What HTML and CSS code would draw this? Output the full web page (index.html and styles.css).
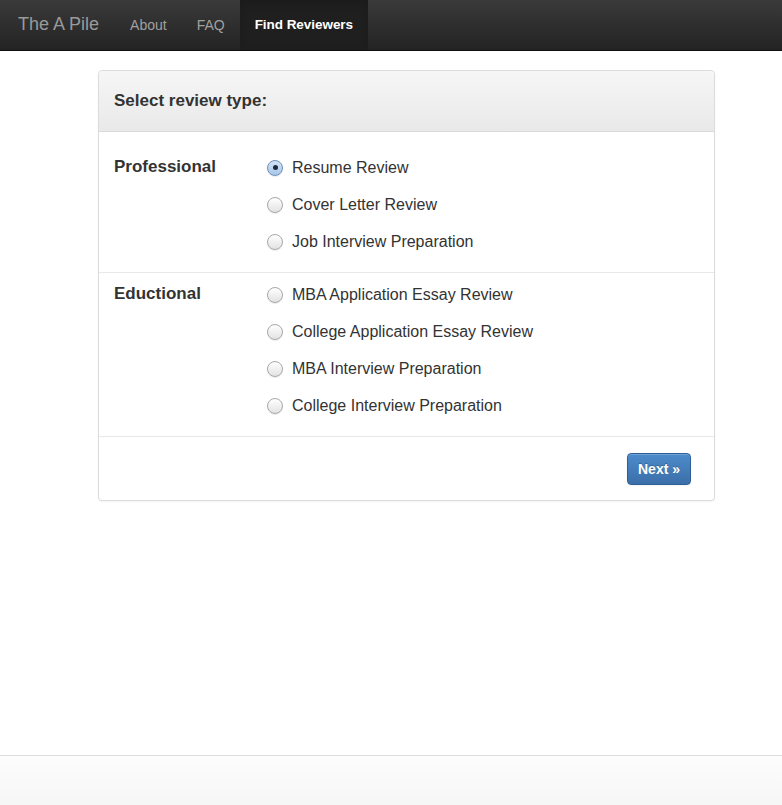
FILE: index.html
```html
<!DOCTYPE html>
<html>
<head>
<meta charset="utf-8">
<title>The A Pile</title>
<link rel="stylesheet" href="styles.css">
</head>
<body>
<div class="page">
  <header class="navbar">
    <a class="brand" href="#">The A Pile</a>
    <nav class="nav">
      <a class="nav-link" href="#">About</a>
      <a class="nav-link" href="#">FAQ</a>
      <a class="nav-link active" href="#">Find Reviewers</a>
    </nav>
  </header>

  <main class="main">
    <form class="panel">
      <div class="panel-header">Select review type:</div>

      <div class="section section-first">
        <div class="section-label">Professional</div>
        <div class="options">
          <label class="option"><input type="radio" name="type" checked><span class="radio"></span><span>Resume Review</span></label>
          <label class="option"><input type="radio" name="type"><span class="radio"></span><span>Cover Letter Review</span></label>
          <label class="option"><input type="radio" name="type"><span class="radio"></span><span>Job Interview Preparation</span></label>
        </div>
      </div>

      <div class="section section-second">
        <div class="section-label">Eductional</div>
        <div class="options">
          <label class="option"><input type="radio" name="type"><span class="radio"></span><span>MBA Application Essay Review</span></label>
          <label class="option"><input type="radio" name="type"><span class="radio"></span><span>College Application Essay Review</span></label>
          <label class="option"><input type="radio" name="type"><span class="radio"></span><span>MBA Interview Preparation</span></label>
          <label class="option"><input type="radio" name="type"><span class="radio"></span><span>College Interview Preparation</span></label>
        </div>
      </div>

      <div class="panel-footer">
        <button type="button" class="btn">Next &raquo;</button>
      </div>
    </form>
  </main>

  <footer class="footer"></footer>
</div>
</body>
</html>
```

FILE: styles.css
```css
* { box-sizing: border-box; }

html, body {
  margin: 0;
  padding: 0;
  height: 100%;
}

body {
  font-family: "Liberation Sans", Arial, Helvetica, sans-serif;
  color: #333;
  background: #fff;
}

.page {
  min-height: 100vh;
  display: flex;
  flex-direction: column;
}

/* navbar */
.navbar {
  height: 51px;
  display: flex;
  align-items: stretch;
  background: linear-gradient(to bottom, #3a3a3a, #232323);
  border-bottom: 1px solid #0e0e0e;
}

.brand {
  display: flex;
  align-items: center;
  padding: 0 16px 2px 18px;
  font-size: 18px;
  color: #9a9a9a;
  text-decoration: none;
}

.nav {
  display: flex;
}

.nav-link {
  display: flex;
  align-items: center;
  padding: 0 15px 1px;
  font-size: 14px;
  color: #a0a0a0;
  text-decoration: none;
}

.nav-link.active {
  background: #1f1f1f;
  color: #fff;
  font-weight: bold;
  font-size: 13.5px;
  letter-spacing: -0.05px;
  padding-left: 15px;
  padding-right: 15px;
  box-shadow: inset 0 3px 8px rgba(0,0,0,0.15);
}

/* main */
.main {
  flex: 1;
  padding-top: 19px;
}

.panel {
  margin-left: 98px;
  width: 617px;
  border: 1px solid #dcdcdc;
  border-radius: 4px;
  box-shadow: 0 1px 2px rgba(0,0,0,0.05);
  background: #fff;
}

.panel-header {
  height: 61px;
  padding: 0 15px;
  display: flex;
  align-items: center;
  font-size: 17px;
  font-weight: bold;
  color: #333;
  background: linear-gradient(to bottom, #f6f6f6, #e9e9e9);
  border-bottom: 1px solid #dadada;
  border-radius: 4px 4px 0 0;
}

.section {
  display: grid;
  grid-template-columns: 153px 1fr;
  padding-left: 15px;
  border-bottom: 1px solid #e8e8e8;
}

.section-first {
  padding-top: 17px;
  padding-bottom: 12px;
}

.section-second {
  padding-top: 3px;
  padding-bottom: 12px;
}

.section-label {
  font-size: 17px;
  font-weight: bold;
  line-height: 37px;
  color: #333;
  margin-top: -1px;
}

.options {
  display: flex;
  flex-direction: column;
}

.option {
  height: 37px;
  display: flex;
  align-items: center;
  font-size: 16px;
  color: #333;
  cursor: pointer;
}

.option input {
  position: absolute;
  opacity: 0;
  width: 0;
  height: 0;
}

.radio {
  width: 16px;
  height: 16px;
  border-radius: 50%;
  margin-right: 9px;
  border: 1px solid #a8a8a8;
  background: linear-gradient(to bottom, #ffffff, #e2e2e2);
  box-shadow: 0 1px 1px rgba(0,0,0,0.08);
  display: flex;
  align-items: center;
  justify-content: center;
  flex: none;
}

.option input:checked + .radio {
  border-color: #6d8fb8;
  background: linear-gradient(to bottom, #d4e4f7, #a9c6ea);
}

.option input:checked + .radio::after {
  content: "";
  width: 5px;
  height: 5px;
  border-radius: 50%;
  background: #1e2a38;
}

.panel-footer {
  padding: 16px 23px 15px;
  display: flex;
  justify-content: flex-end;
}

.btn {
  height: 32px;
  width: 64px;
  padding: 0;
  font-family: inherit;
  font-size: 14px;
  font-weight: bold;
  color: #fff;
  border: 1px solid #2e5f96;
  border-radius: 4px;
  background: linear-gradient(to bottom, #4d8bcb, #3b6fa9);
  box-shadow: inset 0 1px 0 rgba(255,255,255,0.2), 0 1px 2px rgba(0,0,0,0.05);
  text-shadow: 0 -1px 0 rgba(0,0,0,0.25);
  cursor: pointer;
}

/* footer */
.footer {
  height: 50px;
  border-top: 1px solid #dedede;
  background: linear-gradient(to bottom, #fdfdfd, #f6f6f6);
}
```
